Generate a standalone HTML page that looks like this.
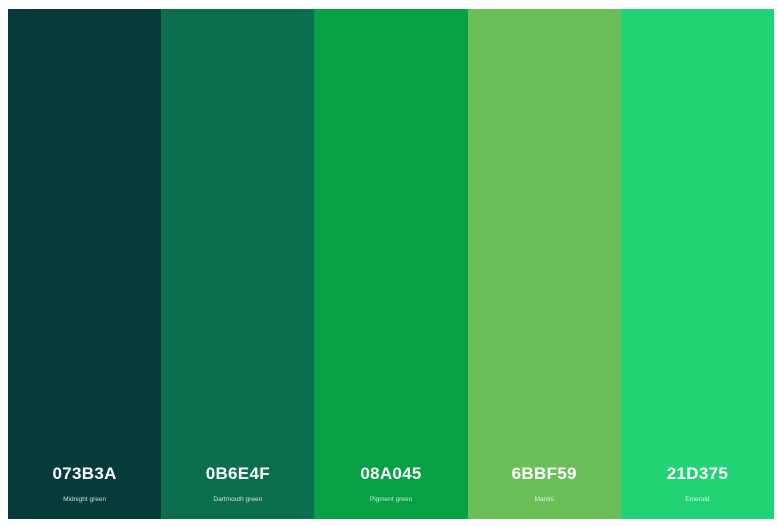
<html><head><style>
body{margin:0;width:778px;height:527px;background:#fff;position:relative;overflow:hidden;font-family:"Liberation Sans",sans-serif}
.p{position:absolute;top:9px;left:8px;width:766px;height:510px;display:flex}
.c{flex:1;position:relative;color:#fff;text-align:center}
.h{position:absolute;top:455px;left:0;right:0;font-size:17px;font-weight:bold;letter-spacing:0.3px}
.n{position:absolute;top:487px;left:0;right:0;font-size:6.5px;opacity:.8}
</style></head><body>
<div class="p">
<div class="c" style="background:#073B3A"><div class="h">073B3A</div><div class="n">Midnight green</div></div>
<div class="c" style="background:#0B6E4F"><div class="h">0B6E4F</div><div class="n">Dartmouth green</div></div>
<div class="c" style="background:#08A045"><div class="h">08A045</div><div class="n">Pigment green</div></div>
<div class="c" style="background:#6BBF59"><div class="h">6BBF59</div><div class="n">Mantis</div></div>
<div class="c" style="background:#21D375"><div class="h">21D375</div><div class="n">Emerald</div></div>
</div>
</body></html>
